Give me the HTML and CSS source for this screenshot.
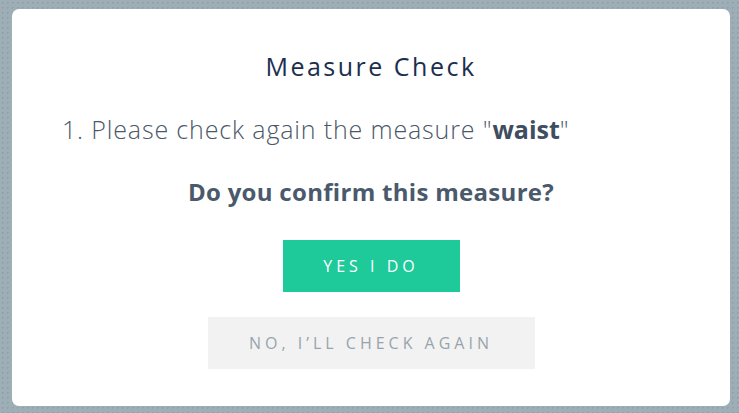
FILE: index.html
```html
<!DOCTYPE html>
<html lang="en">
<head>
    <meta charset="UTF-8">
    <meta name="viewport" content="width=device-width, initial-scale=1.0">
    <title>Measure Check</title>
    <link rel="stylesheet" href="styles.css">
</head>
<body>
    <div class="modal">
        <h2 class="modal-title">Measure Check</h2>

        <ol class="check-list">
            <li>1. Please check again the measure "<b>waist</b>"</li>
        </ol>

        <p class="question">Do you confirm this measure?</p>

        <div class="actions">
            <button class="btn btn-yes">YES I DO</button>
            <button class="btn btn-no">NO, I&rsquo;LL CHECK AGAIN</button>
        </div>
    </div>
</body>
</html>
```

FILE: styles.css
```css
html, body {
    height: 100%;
}
body {
    margin: 0;
    padding: 9px 9px 7px 12px;
    box-sizing: border-box;
    font-family: "Open Sans", "Liberation Sans", sans-serif;
    background-color: #9eaeb6;
    background-image: radial-gradient(rgba(120, 140, 150, 0.35) 1px, transparent 1px);
    background-size: 5px 5px;
}
.modal {
    height: 100%;
    background-color: #fff;
    border-radius: 7px;
    box-sizing: border-box;
    padding: 41px 50px 0;
    display: flex;
    flex-direction: column;
}
.modal-title {
    margin: 0;
    text-align: center;
    font-size: 25px;
    line-height: 32px;
    font-weight: 500;
    letter-spacing: 2.5px;
    color: #1c2e4e;
}
.check-list {
    list-style: none;
    margin: 31px 0 0;
    padding: 0;
    font-size: 25px;
    line-height: 32px;
    font-weight: 300;
    letter-spacing: 0.85px;
    color: #4b5868;
}
.check-list b {
    font-weight: 700;
    letter-spacing: 0;
    color: #3f4d5f;
}
.question {
    margin: 32px 0 0;
    text-align: center;
    font-size: 24px;
    line-height: 30px;
    font-weight: 700;
    letter-spacing: 0.3px;
    color: #4a596c;
}
.actions {
    margin-top: 33px;
    display: flex;
    flex-direction: column;
    align-items: center;
    gap: 25px;
}
.btn {
    height: 52px;
    border: none;
    border-radius: 0;
    font-family: inherit;
    font-size: 16px;
    letter-spacing: 4px;
    cursor: pointer;
}
.btn-yes {
    width: 177px;
    background-color: #1ec99a;
    color: #fff;
}
.btn-no {
    width: 327px;
    background-color: #f2f2f2;
    color: #98a4ad;
}
```
